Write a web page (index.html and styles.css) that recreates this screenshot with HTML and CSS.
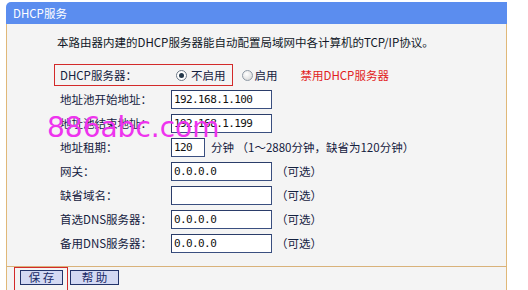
FILE: index.html
```html
<!DOCTYPE html>
<html lang="zh">
<head>
<meta charset="utf-8">
<title>DHCP服务</title>
<link rel="stylesheet" href="styles.css">
</head>
<body>
<div class="panel">
  <div class="panel-head">DHCP服务</div>
  <div class="panel-body">
    <p class="intro">本路由器内建的DHCP服务器能自动配置局域网中各计算机的TCP/IP协议。</p>
    <div class="form">
      <div class="row">
        <div class="hl-box">
          <span class="label">DHCP服务器：</span>
          <span class="radio checked"></span><span class="opt">不启用</span>
        </div>
        <span class="radio"></span><span class="opt">启用</span>
        <span class="note-red">禁用DHCP服务器</span>
      </div>
      <div class="row"><span class="label">地址池开始地址：</span><span class="field">192.168.1.100</span></div>
      <div class="row"><span class="label">地址池结束地址：</span><span class="field">192.168.1.199</span></div>
      <div class="row"><span class="label">地址租期：</span><span class="field short">120</span><span class="hint">分钟 （1～2880分钟，缺省为120分钟）</span></div>
      <div class="row"><span class="label">网关：</span><span class="field">0.0.0.0</span><span class="opt-hint">（可选）</span></div>
      <div class="row"><span class="label">缺省域名：</span><span class="field"></span><span class="opt-hint">（可选）</span></div>
      <div class="row"><span class="label">首选DNS服务器：</span><span class="field">0.0.0.0</span><span class="opt-hint">（可选）</span></div>
      <div class="row"><span class="label">备用DNS服务器：</span><span class="field">0.0.0.0</span><span class="opt-hint">（可选）</span></div>
    </div>
  </div>
  <div class="panel-foot">
    <div class="hl-box btn-box"><span class="btn save">保 存</span></div>
    <span class="btn help">帮 助</span>
  </div>
</div>
<div class="watermark">886abc.com</div>
</body>
</html>
```
FILE: styles.css
```css
html, body {
  margin: 0;
  padding: 0;
  background: #ffffff;
  overflow: hidden;
}
body {
  font-family: "Noto Sans CJK SC", "Noto Sans", sans-serif;
  font-size: 11.5px;
  color: #14213f;
  position: relative;
  height: 290px;
}
.panel {
  margin: 2px 0 0 6px;
  width: 501px;
}
.panel-head {
  height: 22px;
  line-height: 22px;
  background: #5b8def;
  color: #ffffff;
  padding-left: 7px;
  border-radius: 5px 0 0 0;
}
.panel-body {
  background: #f4f4f4;
  border-left: 1px solid #e0b878;
  border-right: 1px solid #e0b878;
  padding: 10px 0 11px 0;
}
.intro {
  margin: 0 0 13px 50px;
  line-height: 16px;
  color: #111827;
}
.form {
  padding-left: 48px;
}
.row {
  display: flex;
  align-items: center;
  height: 24px;
}
.label {
  width: 111px;
  padding-left: 5px;
  flex: none;
  line-height: 16px;
}
.hl-box {
  display: flex;
  align-items: center;
  border: 1px solid #d32a2a;
  height: 20px;
  margin-left: -1px;
  padding-right: 6px;
}
.radio {
  width: 11px;
  height: 11px;
  box-sizing: border-box;
  border-radius: 50%;
  border: 1px solid #8f9aa6;
  background: radial-gradient(circle at 40% 35%, #ffffff 0%, #e6e6e6 55%, #c9c9c9 100%);
  margin: 0 4px 0 5px;
  flex: none;
  position: relative;
}
.radio.checked {
  background: #ffffff;
  border-color: #6c7886;
}
.radio.checked::after {
  content: "";
  position: absolute;
  left: 2px;
  top: 2px;
  width: 5px;
  height: 5px;
  border-radius: 50%;
  background: #24384a;
}
.opt {
  line-height: 16px;
}
.row > .radio {
  margin-left: 9px;
  margin-right: 2px;
}
.note-red {
  color: #e21d1d;
  margin-left: 23px;
}
.field {
  box-sizing: border-box;
  width: 101px;
  height: 19px;
  border: 1px solid #3a4f80;
  border-top-color: #2b3d6a;
  border-left-color: #2b3d6a;
  background: #ffffff;
  font-family: "DejaVu Sans Mono", "Liberation Mono", monospace;
  font-size: 11px;
  letter-spacing: -0.6px;
  line-height: 17px;
  padding-left: 2px;
  color: #111111;
  flex: none;
}
.field.short {
  width: 34px;
}
.hint {
  margin-left: 6px;
}
.opt-hint {
  margin-left: 4px;
}
.panel-foot {
  background: #f4f4f4;
  border-left: 1px solid #e0b878;
  border-right: 1px solid #e0b878;
  border-top: 1px solid #d9b27a;
  height: 23px;
  overflow: hidden;
  display: flex;
  align-items: flex-start;
  padding-left: 7px;
}
.btn-box {
  height: auto;
  margin-left: 0;
  padding: 2px 4px 8px 5px;
}
.btn {
  display: inline-flex;
  align-items: center;
  justify-content: center;
  box-sizing: border-box;
  height: 15px;
  border: 1px solid #22336a;
  background: #d3d9f3;
  color: #1a2a66;
  line-height: 13px;
}
.save {
  width: 43px;
}
.help {
  width: 49px;
  margin: 3px 0 0 2px;
}
.watermark {
  position: absolute;
  left: 47px;
  top: 114px;
  font-family: "DejaVu Sans", sans-serif;
  font-size: 28px;
  line-height: 28px;
  color: #ee33ee;
  white-space: nowrap;
}
```
